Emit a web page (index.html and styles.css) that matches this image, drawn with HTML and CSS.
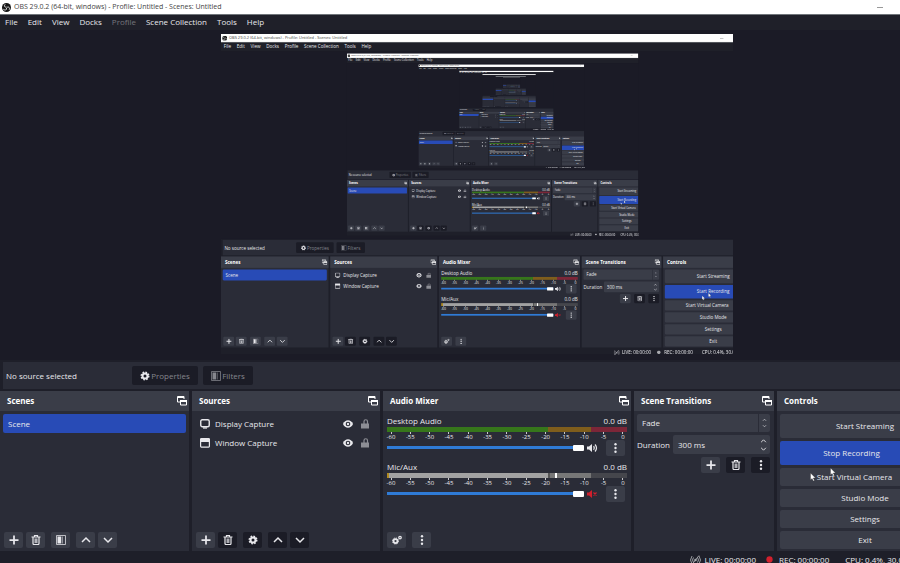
FILE: index.html
```html
<!DOCTYPE html>
<html lang="en">

<head>
    <meta charset="UTF-8">
    <meta name="viewport" content="width=device-width, initial-scale=1.0">
    <title>OBS 29.0.2</title>
    <link rel="stylesheet" href="styles.css">
</head>

<body>
    <!-- icon sprite -->
    <svg class="sprite" aria-hidden="true">
        <symbol id="i-logo" viewBox="0 0 20 20">
            <circle cx="10" cy="10" r="10" fill="#151515" />
            <g fill="none" stroke="#eee" stroke-width="2">
                <path d="M10 9C5 10 4 6 7 3" />
                <path d="M11 10c4-3 7 1 5 5" />
                <path d="M10 11c1 5-3 6-7 3" />
            </g>
        </symbol>
        <symbol id="i-float" viewBox="0 0 20 20">
            <path d="M1 12V1h13v5M1 3h13M1 12h5" fill="none" stroke="currentColor" stroke-width="2" />
            <path d="M7 9h12v9H7z" fill="none" stroke="currentColor" stroke-width="2" />
            <path d="M6 8h14v4H6z" fill="currentColor" />
        </symbol>
        <symbol id="i-plus" viewBox="0 0 20 20">
            <path d="M10 1v18M1 10h18" stroke="currentColor" stroke-width="3.5" />
        </symbol>
        <symbol id="i-trash" viewBox="0 0 20 20">
            <path d="M1 4h18M7 3V1h6v2M4 5v12q0 2 2 2h8q2 0 2-2V5" fill="none" stroke="currentColor" stroke-width="2.4" />
            <path d="M7 7h6v9H7z" fill="currentColor" opacity=".7" />
        </symbol>
        <symbol id="i-filter" viewBox="0 0 20 20">
            <path d="M1 1h18v18H1z" fill="none" stroke="currentColor" stroke-width="1.5" />
            <path d="M3 3h7v14H3z" fill="currentColor" />
            <path d="M11 3h3v14h-3z" fill="currentColor" opacity=".5" />
        </symbol>
        <symbol id="i-up" viewBox="0 0 20 20">
            <path d="M2 14l8-8 8 8" fill="none" stroke="currentColor" stroke-width="3" />
        </symbol>
        <symbol id="i-down" viewBox="0 0 20 20">
            <path d="M2 6l8 8 8-8" fill="none" stroke="currentColor" stroke-width="3" />
        </symbol>
        <symbol id="i-gear" viewBox="0 0 20 20">
            <circle cx="10" cy="10" r="5" fill="none" stroke="currentColor" stroke-width="4" />
            <circle cx="10" cy="10" r="7.5" fill="none" stroke="currentColor" stroke-width="3" stroke-dasharray="3.2 2.69" />
        </symbol>
        <symbol id="i-gears" viewBox="0 0 20 20">
            <circle cx="7" cy="12" r="4" fill="none" stroke="currentColor" stroke-width="3.5" />
            <circle cx="7" cy="12" r="6" fill="none" stroke="currentColor" stroke-width="2" stroke-dasharray="2.5 2.2" />
            <circle cx="16" cy="5" r="2.5" fill="none" stroke="currentColor" stroke-width="2.5" />
        </symbol>
        <symbol id="i-dots" viewBox="0 0 20 20">
            <g fill="currentColor">
                <circle cx="10" cy="2.5" r="2.4" />
                <circle cx="10" cy="10" r="2.4" />
                <circle cx="10" cy="17.5" r="2.4" />
            </g>
        </symbol>
        <symbol id="i-display" viewBox="0 0 20 20">
            <rect x="1.5" y="1.5" width="17" height="14" rx="3" fill="none" stroke="currentColor" stroke-width="2.8" />
            <path d="M6 18h8" stroke="currentColor" stroke-width="2.5" />
        </symbol>
        <symbol id="i-window" viewBox="0 0 20 20">
            <rect x="1.2" y="1.2" width="17.6" height="17" rx="1.5" fill="none" stroke="currentColor" stroke-width="2.4" />
            <path d="M1 2h18v6H1z" fill="currentColor" />
        </symbol>
        <symbol id="i-eye" viewBox="0 0 20 20">
            <path d="M0 10c4-10 16-10 20 0-4 10-16 10-20 0z" fill="currentColor" />
            <circle cx="10" cy="10" r="4.6" fill="#2a2c37" />
            <circle cx="10" cy="10" r="2.4" fill="currentColor" />
        </symbol>
        <symbol id="i-lock" viewBox="0 0 16 20">
            <path d="M6 10V5q0-3.5 3.5-3.5T13 5v5" fill="none" stroke="currentColor" stroke-width="2.4" />
            <path d="M0 9h16v10H0z" fill="currentColor" />
        </symbol>
        <symbol id="i-sound" viewBox="0 0 22 20">
            <path d="M0 7h4l6-5v16l-6-5H0z" fill="currentColor" />
            <path d="M13 6.5q3 3.5 0 7M16 3q6 7 0 14" fill="none" stroke="currentColor" stroke-width="2.4" />
        </symbol>
        <symbol id="i-muted" viewBox="0 0 22 20">
            <path d="M0 7h4l6-5v16l-6-5H0z" fill="currentColor" />
            <path d="M13 7l6 6M19 7l-6 6" stroke="currentColor" stroke-width="2.4" />
        </symbol>
        <symbol id="i-live" viewBox="0 0 22 20">
            <circle cx="11" cy="10" r="2.5" fill="currentColor" />
            <path d="M7 5q-4 5 0 10M15 5q4 5 0 10M4 2q-6 8 0 16M18 2q6 8 0 16M4 19L18 1" fill="none" stroke="currentColor" stroke-width="1.8" />
        </symbol>
        <symbol id="i-rec" viewBox="0 0 20 20">
            <circle cx="10" cy="10" r="9" fill="currentColor" />
        </symbol>
        <symbol id="i-pause" viewBox="0 0 20 20">
            <path d="M6 3v14M14 3v14" stroke="currentColor" stroke-width="4" />
        </symbol>
        <symbol id="i-cursor" viewBox="0 0 12 18">
            <path d="M1 1v14l3-3 2.5 5 2.5-1-2.5-5H11z" fill="#fff" stroke="#222" stroke-width=".6" />
        </symbol>
    </svg>

    <div class="screen">
        <div class="window">
            <header class="titlebar">
                <svg class="logo"><use href="#i-logo" /></svg>
                <span>OBS 29.0.2 (64-bit, windows) - Profile: Untitled - Scenes: Untitled</span>
                <button class="minimize" aria-label="Minimize"></button>
            </header>

            <nav class="menu">
                <a href="#">File</a>
                <a href="#">Edit</a>
                <a href="#">View</a>
                <a href="#">Docks</a>
                <a href="#" class="off">Profile</a>
                <a href="#">Scene Collection</a>
                <a href="#">Tools</a>
                <a href="#">Help</a>
            </nav>

            <main class="preview">
                <div class="capture"></div>
            </main>

            <div class="context">
                <span>No source selected</span>
                <button class="props"><svg><use href="#i-gear" /></svg>Properties</button>
                <button><svg><use href="#i-filter" /></svg>Filters</button>
            </div>

            <div class="docks">
                <section class="dock">
                    <h2>Scenes <svg><use href="#i-float" /></svg></h2>
                    <ul class="list">
                        <li class="on">Scene</li>
                    </ul>
                    <div class="tools">
                        <button aria-label="Add scene"><svg><use href="#i-plus" /></svg></button>
                        <button aria-label="Remove scene"><svg><use href="#i-trash" /></svg></button>
                        <button class="split" aria-label="Scene filters"><svg><use href="#i-filter" /></svg></button>
                        <button class="split" aria-label="Move scene up"><svg><use href="#i-up" /></svg></button>
                        <button aria-label="Move scene down"><svg><use href="#i-down" /></svg></button>
                    </div>
                </section>

                <section class="dock">
                    <h2>Sources <svg><use href="#i-float" /></svg></h2>
                    <ul class="list">
                        <li>
                            <svg><use href="#i-display" /></svg>
                            <span>Display Capture</span>
                            <svg><use href="#i-eye" /></svg>
                            <svg class="lock"><use href="#i-lock" /></svg>
                        </li>
                        <li>
                            <svg><use href="#i-window" /></svg>
                            <span>Window Capture</span>
                            <svg><use href="#i-eye" /></svg>
                            <svg class="lock"><use href="#i-lock" /></svg>
                        </li>
                    </ul>
                    <div class="tools">
                        <button aria-label="Add source"><svg><use href="#i-plus" /></svg></button>
                        <button class="dark" aria-label="Remove source"><svg><use href="#i-trash" /></svg></button>
                        <button class="dark split" aria-label="Source properties"><svg><use href="#i-gear" /></svg></button>
                        <button class="dark split" aria-label="Move source up"><svg><use href="#i-up" /></svg></button>
                        <button class="dark" aria-label="Move source down"><svg><use href="#i-down" /></svg></button>
                    </div>
                </section>

                <section class="dock">
                    <h2>Audio Mixer <svg><use href="#i-float" /></svg></h2>
                    <div class="mixer">
                        <div class="channel">
                            <p><span>Desktop Audio</span><span>0.0 dB</span></p>
                            <div class="meter"></div>
                            <div class="scale"></div>
                            <div class="volume">
                                <input type="range" value="100" aria-label="Desktop Audio volume">
                                <svg><use href="#i-sound" /></svg>
                                <button aria-label="Desktop Audio options"><svg><use href="#i-dots" /></svg></button>
                            </div>
                        </div>
                        <div class="channel">
                            <p><span>Mic/Aux</span><span>0.0 dB</span></p>
                            <div class="meter muted"></div>
                            <div class="scale"></div>
                            <div class="volume">
                                <input type="range" value="100" aria-label="Mic/Aux volume">
                                <svg class="red"><use href="#i-muted" /></svg>
                                <button aria-label="Mic/Aux options"><svg><use href="#i-dots" /></svg></button>
                            </div>
                        </div>
                    </div>
                    <div class="tools">
                        <button aria-label="Advanced audio properties"><svg><use href="#i-gears" /></svg></button>
                        <button class="split" aria-label="Mixer menu"><svg><use href="#i-dots" /></svg></button>
                    </div>
                </section>

                <section class="dock">
                    <h2>Scene Transitions <svg><use href="#i-float" /></svg></h2>
                    <div class="transitions">
                        <div class="field combo">
                            <select aria-label="Transition">
                                <option>Fade</option>
                            </select>
                            <span class="arrows"><svg><use href="#i-up" /></svg><svg><use href="#i-down" /></svg></span>
                        </div>
                        <label class="duration">Duration
                            <span class="field spin">
                                <input type="text" value="300 ms">
                                <span class="arrows"><svg><use href="#i-up" /></svg><svg><use href="#i-down" /></svg></span>
                            </span>
                        </label>
                        <div class="tools">
                            <button aria-label="Add transition"><svg><use href="#i-plus" /></svg></button>
                            <button class="dark split" aria-label="Remove transition"><svg><use href="#i-trash" /></svg></button>
                            <button class="dark split" aria-label="Transition menu"><svg><use href="#i-dots" /></svg></button>
                        </div>
                    </div>
                </section>

                <section class="dock controls">
                    <h2>Controls</h2>
                    <div class="stack">
                        <button class="tall">Start Streaming</button>
                        <div class="row tall">
                            <button class="record">Stop Recording</button>
                            <button class="pause" aria-label="Pause recording"><svg><use href="#i-pause" /></svg></button>
                        </div>
                        <div class="row">
                            <button>Start Virtual Camera</button>
                            <button class="config" aria-label="Configure virtual camera"><svg><use href="#i-gear" /></svg></button>
                        </div>
                        <button>Studio Mode</button>
                        <button>Settings</button>
                        <button>Exit</button>
                    </div>
                    <svg class="cursor"><use href="#i-cursor" /></svg>
                    <svg class="cursor second"><use href="#i-cursor" /></svg>
                </section>
            </div>

            <footer class="status">
                <svg class="live"><use href="#i-live" /></svg>
                <span>LIVE: 00:00:00</span>
                <svg class="rec"><use href="#i-rec" /></svg>
                <span>REC: 00:00:00</span>
                <span class="cpu">CPU: 0.4%, 30.00 fps</span>
            </footer>
        </div>
    </div>

    <script>
        // meter labels, -60 to 0
        document.querySelectorAll('.scale').forEach(function (scale) {
            for (let db = -60; db <= 0; db += 5) {
                const mark = document.createElement('span');
                mark.textContent = db;
                scale.appendChild(mark);
            }
        });

        // display capture of the window itself, a copy in a copy
        const screen0 = document.querySelector('.screen');
        const capture = screen0.querySelector('.capture');
        for (let i = 0; i < 7; i++) {
            const copy = screen0.cloneNode(true);
            copy.querySelectorAll('.record').forEach(function (btn) {
                btn.textContent = 'Start Recording';
            });
            // the innermost copies are only a few pixels wide, no labels there
            if (i < 3) {
                copy.querySelectorAll('.scale, .titlebar span, .menu a, .status span, .channel p').forEach(function (el) {
                    el.textContent = '';
                });
            }
            copy.inert = true;
            capture.replaceChildren(copy);
        }
    </script>
</body>

</html>
```

FILE: styles.css
```css
* {
    margin: 0;
    padding: 0;
    box-sizing: border-box;
}

body {
    background: #1b1b26;
    overflow: hidden;
    font-family: "Open Sans", "Noto Sans", sans-serif;
    font-size: 8px;
    line-height: 12px;
    color: #e8e8ec;
}

button,
input,
select {
    font: inherit;
    color: inherit;
    border: 0;
    background: none;
}

svg {
    display: block;
    flex: none;
    width: 10px;
    height: 10px;
}

.sprite {
    position: absolute;
    width: 0;
    height: 0;
}

/* the window is a bit wider than the screen */
.screen {
    width: 100vw;
    height: 100vh;
    overflow: hidden;
    background: #1e1f29;
}

.window {
    display: flex;
    flex-direction: column;
    width: calc(100vw + 54px);
    height: 100%;
}

.titlebar {
    display: flex;
    align-items: center;
    gap: 3px;
    height: 15px;
    padding: 0 71px 0 2px;
    background: #fff;
    border-bottom: 1px solid #70757a;
    font-size: 7px;
    color: #444;
}

.titlebar .logo {
    width: 9px;
    height: 9px;
}

.minimize {
    width: 6px;
    height: 1px;
    margin-left: auto;
    background: #999;
}

.menu {
    display: flex;
    gap: 10px;
    height: 15px;
    padding: 0 5px;
    line-height: 14px;
    background: #1f2029;
}

.menu a {
    color: inherit;
    text-decoration: none;
}

.menu .off {
    color: #75757c;
}

.capture .menu .off {
    color: inherit;
}

.preview {
    display: flex;
    flex: 1;
    justify-content: center;
    min-height: 0;
    padding-top: 4px;
    background: #1b1b26;
}

.capture {
    flex: none;
    width: 56.9vw;
    height: 56.9vh;
    overflow-x: clip;
}

.capture > .screen {
    overflow: visible;
    overflow-x: clip;
    transform: scale(.569);
    transform-origin: 0 0;
}

.context {
    display: flex;
    align-items: center;
    gap: 5px;
    height: 27px;
    margin: 2px 0 2px 3px;
    padding-left: 3px;
    background: #2a2c37;
}

.context button {
    display: flex;
    align-items: center;
    justify-content: center;
    gap: 1px;
    width: 50px;
    height: 19px;
    border-radius: 2px;
    background: #1b1c26;
    color: #85868d;
}

.context .props {
    width: 66px;
    margin-left: 50px;
}

.context .props svg {
    color: #e8e8ec;
}

/* docks */
.docks {
    display: grid;
    grid-template-columns: 189fr 188fr 248fr 140fr 177fr;
    gap: 3px;
    height: 160px;
}

.dock {
    display: flex;
    flex-direction: column;
    min-width: 0;
    background: #2a2c37;
}

.dock h2 {
    display: flex;
    align-items: center;
    justify-content: space-between;
    height: 20px;
    padding: 0 2px 0 7px;
    background: #3a3d48;
    font-size: 8px;
    color: #fff;
}

.list {
    flex: 1;
    padding: 3px;
    list-style: none;
}

.list li {
    display: flex;
    align-items: center;
    gap: 5px;
    height: 19px;
    padding: 0 5px;
}

.list li.on {
    border-radius: 2px;
    background: #284bb6;
}

.list span {
    flex: 1;
}

.list .lock {
    width: 14px;
    color: #8d8e95;
}

.tools {
    display: flex;
    gap: 3px;
    padding: 0 4px 3px;
}

.tools button,
.volume button {
    display: grid;
    place-items: center;
    width: 19px;
    height: 16px;
    border-radius: 2px;
    background: #3a3d48;
}

.tools .dark {
    background: #1b1c26;
}

.tools .split {
    margin-left: 3px;
}

/* mixer */
.mixer {
    flex: 1;
    padding: 4px 4px 0;
}

.channel {
    height: 46px;
}

.channel p {
    display: flex;
    justify-content: space-between;
    height: 12px;
}

.meter {
    height: 5px;
    background: linear-gradient(90deg, #36761b 67%, #7f5d1c 67% 85%, #7c2638 85%);
}

.meter.muted {
    background: linear-gradient(90deg, #b08a20 1%, #a2a2a2 1% 67%, #555 67% 68%, #777 68% 70%, #fff 70% 71%, #777 71% 85%, #45464c 85%);
}

.scale {
    display: flex;
    justify-content: space-between;
    height: 8px;
    font-size: 6px;
}

.scale span {
    display: flex;
    flex-direction: column;
    align-items: center;
    width: 8px;
    line-height: 6px;
}

.scale span::before {
    content: "";
    flex: none;
    width: 1px;
    height: 2px;
    background: #c8c8cc;
}

.volume {
    display: flex;
    align-items: center;
    gap: 3px;
    height: 15px;
}

.volume svg {
    width: 11px;
}

.volume .red {
    color: #d01f2c;
}

.volume button {
    margin: 0 2px 0 5px;
}

.volume input {
    flex: 1;
    min-width: 0;
    height: 6px;
    appearance: none;
    background: linear-gradient(#2f7bd6, #2f7bd6) center / 100% 3px no-repeat;
}

.volume input::-webkit-slider-thumb {
    appearance: none;
    width: 11px;
    height: 6px;
    border-radius: 1px;
    background: #fff;
}

/* transitions */
.transitions {
    display: flex;
    flex-direction: column;
    gap: 3px;
    padding: 3px 4px 0 3px;
}

.field {
    display: flex;
    align-items: center;
    min-width: 0;
    height: 18px;
    border-radius: 2px;
    background: #3a3d48;
}

.field select,
.field input {
    flex: 1;
    min-width: 0;
    height: 100%;
    padding-left: 5px;
    appearance: none;
}

.arrows {
    display: grid;
    place-content: center;
    gap: 2px;
    width: 12px;
    height: 100%;
}

.arrows svg {
    width: 5px;
    height: 4px;
}

.combo .arrows {
    border-left: 1px solid #2a2c37;
}

.duration {
    display: flex;
    align-items: center;
    gap: 3px;
}

.spin {
    flex: 1;
    height: 19px;
}

.spin .arrows {
    width: 14px;
}

.spin .arrows svg {
    width: 7px;
    height: 6px;
}

.transitions .tools {
    justify-content: flex-end;
    padding: 0;
}

/* controls */
.controls {
    position: relative;
}

.stack {
    display: flex;
    flex-direction: column;
    gap: 3px;
    padding: 3px 4px 0 3px;
}

.stack button {
    height: 18px;
    border-radius: 2px;
    background: #3a3d48;
}

.stack .tall,
.tall button {
    height: 24px;
}

.row {
    display: flex;
    gap: 3px;
}

.row button {
    flex: 1;
}

.row .config,
.row .pause {
    display: grid;
    flex: none;
    place-items: center;
    width: 18px;
}

.row .pause {
    width: 24px;
}

.stack .record {
    background: #284bb6;
}

.capture .pause {
    display: none;
}

/* mouse pointers lie over the buttons */
.cursor {
    position: absolute;
    top: 81px;
    left: 33px;
    width: 6px;
    height: 10px;
}

.cursor.second {
    top: 76px;
    left: 53px;
}

.capture .cursor {
    top: 68px;
    left: 68px;
}

.capture .cursor.second {
    top: 63px;
    left: 79px;
}

.status {
    display: flex;
    justify-content: flex-end;
    gap: 4px;
    height: 12px;
    padding-right: 33px;
    line-height: 17px;
}

.status svg {
    width: 11px;
    margin-top: 4px;
}

.status .live {
    color: #a8a9ae;
}

.status .rec {
    width: 7px;
    height: 7px;
    margin: 5px 2px 0 6px;
    color: #d3202d;
}

.capture .status .rec {
    color: #a8a9ae;
}

.cpu {
    margin-left: 12px;
}
```
